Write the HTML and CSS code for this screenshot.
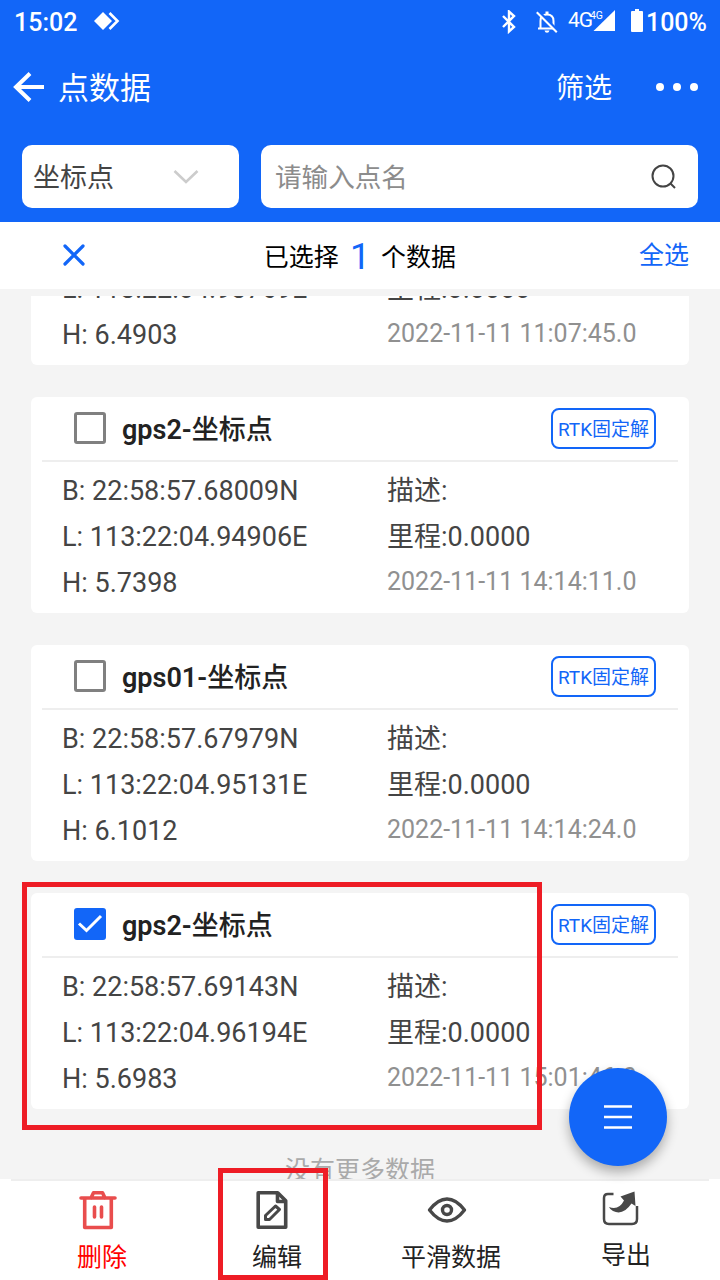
FILE: index.html
```html
<!DOCTYPE html>
<html lang="zh-CN">
<head>
    <meta charset="UTF-8">
    <meta name="viewport" content="width=device-width, initial-scale=1.0">
    <title>点数据</title>
    <link rel="stylesheet" href="styles.css">
</head>
<body>

    <div class="app">
        <header>
            <div class="status">
                <span class="time">15:02</span>
                <svg class="diamond" width="26" height="20" viewBox="0 0 26 20">
                    <path d="M9 1l9 9-9 9-9-9z" fill="#fff"/>
                    <path d="M15.500 2l8 8-8 8" fill="none" stroke="#fff" stroke-width="2.600"/>
                </svg>
                <svg class="bluetooth" width="16" height="24" viewBox="0 0 16 24">
                    <path d="M2 6l11 11-5 4.500V1.500L13 6 2 17" fill="none" stroke="#fff" stroke-width="2.400"/>
                </svg>
                <svg class="bell" width="22" height="24" viewBox="0 0 22 24">
                    <path d="M4.500 18V11q0-6.500 6.500-6.500T17.500 11v7M2 18.500h18" fill="none" stroke="#fff" stroke-width="2"/>
                    <path d="M9.500 1.500h3v3h-3zM8.500 20.500h5q-.5 2.300-2.500 2.300t-2.500-2.300z" fill="#fff"/>
                    <path d="M2.500 1.500l20 20" stroke="#1266f8" stroke-width="3"/>
                    <path d="M.8 2.300l20 20" stroke="#fff" stroke-width="2"/>
                </svg>
                <span class="net">4G</span>
                <svg class="signal" width="26" height="23" viewBox="0 0 26 23">
                    <path d="M25 1v21H3.500z" fill="#fff"/>
                    <text x="0" y="9.500" textLength="13" lengthAdjust="spacingAndGlyphs">4G</text>
                </svg>
                <svg class="battery" width="12" height="23" viewBox="0 0 12 23">
                    <path d="M4 0h4v2h3q1 0 1 1v19q0 1-1 1H1q-1 0-1-1V3q0-1 1-1h3z" fill="#fff"/>
                </svg>
                <span class="percent">100%</span>
            </div>
            <div class="title">
                <svg width="32" height="32" viewBox="0 0 32 32">
                    <path d="M17 2.500L3 16l14 13.500M3 16h28" fill="none" stroke="#fff" stroke-width="4"/>
                </svg>
                <h1>点数据</h1>
                <span class="filter">筛选</span>
                <svg class="more" width="44" height="10" viewBox="0 0 44 10">
                    <g fill="#fff"><circle cx="5" cy="5" r="4"/><circle cx="22" cy="5" r="4"/><circle cx="39" cy="5" r="4"/></g>
                </svg>
            </div>
            <div class="search">
                <div class="select">
                    <span>坐标点</span>
                    <svg width="26" height="16" viewBox="0 0 26 16">
                        <path d="M1.500 2L13 13 24.500 2" fill="none" stroke="#ccc" stroke-width="2.600"/>
                    </svg>
                </div>
                <div class="keyword">
                    <span>请输入点名</span>
                    <svg width="26" height="26" viewBox="0 0 26 26">
                        <g fill="none" stroke="#444" stroke-width="2"><circle cx="12" cy="12" r="10.500"/><path d="M19 19l5 5"/></g>
                    </svg>
                </div>
            </div>
        </header>

        <div class="selected">
            <svg width="24" height="24" viewBox="0 0 24 24">
                <path d="M3 2l18 18M21 2L3 20" fill="none" stroke="#1266f8" stroke-width="3.200" stroke-linecap="round"/>
            </svg>
            <div class="count">已选择<b>1</b>个数据</div>
            <span class="all">全选</span>
        </div>

        <div class="list">
            <div class="card">
                <div class="name"><i class="check"></i><h2><b>gps1-</b>坐标点</h2><span class="tag">RTK固定解</span></div>
                <div class="info">
                    <span>B: 22:58:57.68112N</span><span>描述:</span>
                    <span>L: 113:22:04.93769E</span><span>里程:0.0000</span>
                    <span>H: 6.4903</span><span class="date">2022-11-11 11:07:45.0</span>
                </div>
            </div>
            <div class="card">
                <div class="name"><i class="check"></i><h2><b>gps2-</b>坐标点</h2><span class="tag">RTK固定解</span></div>
                <div class="info">
                    <span>B: 22:58:57.68009N</span><span>描述:</span>
                    <span>L: 113:22:04.94906E</span><span>里程:0.0000</span>
                    <span>H: 5.7398</span><span class="date">2022-11-11 14:14:11.0</span>
                </div>
            </div>
            <div class="card">
                <div class="name"><i class="check"></i><h2><b>gps01-</b>坐标点</h2><span class="tag">RTK固定解</span></div>
                <div class="info">
                    <span>B: 22:58:57.67979N</span><span>描述:</span>
                    <span>L: 113:22:04.95131E</span><span>里程:0.0000</span>
                    <span>H: 6.1012</span><span class="date">2022-11-11 14:14:24.0</span>
                </div>
            </div>
            <div class="card">
                <div class="name">
                    <i class="check on"><svg width="32" height="32" viewBox="0 0 32 32"><path d="M5 15.500l7.500 7L27 8" fill="none" stroke="#fff" stroke-width="3"/></svg></i>
                    <h2><b>gps2-</b>坐标点</h2><span class="tag">RTK固定解</span>
                </div>
                <div class="info">
                    <span>B: 22:58:57.69143N</span><span>描述:</span>
                    <span>L: 113:22:04.96194E</span><span>里程:0.0000</span>
                    <span>H: 5.6983</span><span class="date">2022-11-11 15:01:46.0</span>
                </div>
            </div>
            <p class="nomore">没有更多数据</p>
        </div>

        <footer>
            <div class="item delete">
                <svg width="40" height="40" viewBox="0 0 40 40">
                    <g fill="none" stroke="#e94d4d" stroke-width="3.600" stroke-linejoin="round" stroke-linecap="round">
                        <path d="M3 8h34M6.700 9v28.500h26.600V9M13 8l2.500-5.200h9L27 8"/>
                        <path d="M16.500 17v10M23.500 17v10"/>
                    </g>
                </svg>
                <span>删除</span>
            </div>
            <div class="item edit">
                <svg width="40" height="40" viewBox="0 0 40 40">
                    <g fill="none" stroke="#484848" stroke-width="3.600" stroke-linejoin="round">
                        <path d="M6.200 2.700h19.500l8 8v26.600H6.200z"/>
                        <path d="M25.500 3v8.500H34"/>
                        <path d="M13.500 29.500v-4L23.500 16l4 3.500-10 10z" stroke-width="3"/>
                    </g>
                </svg>
                <span>编辑</span>
            </div>
            <div class="item smooth">
                <svg width="40" height="40" viewBox="0 0 40 40">
                    <g fill="none" stroke="#484848" stroke-width="3.400" stroke-linejoin="round">
                        <path d="M2.500 20Q11 9 20 9t17.500 11Q29 31 20 31T2.500 20z"/>
                        <circle cx="20" cy="20" r="4.500"/>
                    </g>
                </svg>
                <span>平滑数据</span>
            </div>
            <div class="item export">
                <svg width="40" height="40" viewBox="0 0 40 40">
                    <path d="M14.500 5H9Q5 5 5 9v21q0 5 5 5h23q5 0 5-5V17" fill="none" stroke="#484848" stroke-width="2.500"/>
                    <path d="M35.500 2.500l1 14.500-4-2.500Q24 27 14 22q-3-1.500-4-4 10 3.500 15-6.500l-3.500-4z" fill="#484848"/>
                </svg>
                <span>导出</span>
            </div>
        </footer>

        <div class="menu">
            <svg width="28" height="26" viewBox="0 0 28 26">
                <path d="M0 2.500h28M0 13h28M0 23.500h28" stroke="#fff" stroke-width="2.600"/>
            </svg>
        </div>
        <div class="mark mark-card"></div>
        <div class="mark mark-edit"></div>
    </div>

</body>
</html>
```
FILE: styles.css
```css
* {
    box-sizing: border-box;
}
body {
    margin: 0;
    font-family: Roboto, "Noto Sans CJK SC", sans-serif;
    color: #444;
}
h1, h2, p {
    margin: 0;
}
svg {
    display: block;
    flex: none;
}
.app {
    position: relative;
    width: 720px;
    height: 1280px;
    display: flex;
    flex-direction: column;
    overflow: hidden;
    background-color: #f4f4f4;
}
header {
    height: 222px;
    background-color: #1266f8;
    color: #fff;
}
.status {
    display: flex;
    align-items: center;
    height: 43px;
    padding: 0 13px 0 14px;
    font-size: 25px;
    font-weight: 500;
}
.time {
    width: 82px;
    padding-top: 2px;
}
.diamond {
    margin-bottom: 1px;
}
.bluetooth {
    margin-left: 381px;
}
.bell {
    margin-left: 19px;
}
.net {
    width: 24px;
    margin-left: 10px;
    padding-bottom: 3px;
    font-size: 21px;
    font-weight: 400;
    letter-spacing: -1px;
}
.signal {
    margin-left: -2px;
    margin-bottom: 2px;
}
.signal text {
    font-size: 11px;
    font-weight: 400;
    fill: #fff;
}
.battery {
    margin-left: 15px;
    margin-bottom: 2px;
}
.percent {
    margin-left: 3px;
    padding-top: 2px;
}
.title {
    display: flex;
    align-items: center;
    height: 88px;
    padding: 0 21px 0 13px;
}
.title h1 {
    margin-left: 13px;
    padding-bottom: 3px;
    font-size: 31px;
    font-weight: 400;
}
.filter {
    margin-left: auto;
    padding-bottom: 2px;
    font-size: 28px;
}
.more {
    margin-left: 43px;
}
.search {
    display: flex;
    gap: 22px;
    padding: 14px 22px;
    font-size: 27px;
}
.select, .keyword {
    display: flex;
    align-items: center;
    justify-content: space-between;
    height: 63px;
    border-radius: 10px;
    background-color: #fff;
    color: #444;
}
.select {
    width: 217px;
    padding: 0 40px 0 11px;
}
.select span, .keyword span {
    padding-bottom: 2px;
}
.keyword {
    flex: 1;
    padding: 0 21px 0 14px;
}
.keyword span {
    color: #8c8c8c;
    font-size: 26.600px;
}
.selected {
    display: flex;
    align-items: center;
    justify-content: space-between;
    height: 67px;
    padding: 0 31px 0 62px;
    background-color: #fff;
    color: #000;
    font-size: 25px;
}
.count {
    display: flex;
    align-items: center;
    margin-right: 5px;
    padding-bottom: 2px;
}
.count b {
    margin: 0 11px;
    padding-top: 5px;
    color: #1266f8;
    font-size: 36px;
    font-weight: 400;
}
.all {
    color: #1266f8;
    padding-bottom: 5px;
}
.list {
    display: flex;
    flex-direction: column;
    justify-content: flex-end;
    height: 883px;
    margin-top: 7px;
    padding: 0 31px;
    overflow: hidden;
}
.card {
    flex: none;
    height: 216px;
    margin-bottom: 32px;
    padding: 0 11px;
    border-radius: 6px;
    background-color: #fff;
}
.name {
    display: flex;
    align-items: center;
    height: 65px;
    padding: 0 22px 2px 32px;
    border-bottom: 2px solid #eee;
}
.check {
    width: 32px;
    height: 32px;
    border: 3px solid #808080;
    border-radius: 3px;
}
.check.on {
    border: 0;
    background-color: #1266f8;
}
.name h2 {
    margin-left: 16px;
    font-size: 27px;
    font-weight: 500;
    line-height: 40px;
    padding-top: 5px;
    color: #222;
}
.name h2 b {
    font-weight: 600;
}
.tag {
    width: 105px;
    height: 41px;
    margin-left: auto;
    margin-top: 2px;
    border: 2px solid #1266f8;
    border-radius: 8px;
    color: #1266f8;
    font-size: 19px;
    line-height: 39px;
    text-align: center;
    white-space: nowrap;
}
.info {
    display: grid;
    grid-template-columns: 325px 1fr;
    grid-auto-rows: 46px;
    padding: 6px 0 0 20px;
    font-size: 27px;
    line-height: 47px;
    white-space: nowrap;
}
.date {
    color: #909090;
    font-size: 25px;
    line-height: 44px;
}
.nomore {
    flex: none;
    height: 38px;
    padding-top: 10px;
    color: #aaa;
    font-size: 25px;
    line-height: 40px;
    text-align: center;
}
footer {
    position: relative;
    display: flex;
    height: 101px;
    background-color: #fff;
    color: #222;
    font-size: 25px;
}
footer::before {
    content: "";
    position: absolute;
    top: 0;
    left: 11px;
    right: 11px;
    height: 2px;
    background-color: #eee;
}
.item {
    display: flex;
    flex-direction: column;
    align-items: center;
    gap: 8px;
    width: 175px;
    padding-top: 11px;
    line-height: 40px;
}
.delete {
    width: 204px;
    color: #f00;
}
.delete svg {
    margin-left: -8px;
}
.edit {
    width: 146px;
}
.edit svg {
    margin-left: -10px;
}
.smooth {
    width: 202px;
}
.smooth svg {
    margin-left: -8px;
}
.export {
    width: 148px;
    gap: 7px;
    padding-top: 10px;
}
.export svg {
    margin-left: -14px;
}
.menu {
    position: absolute;
    left: 569px;
    top: 1068px;
    display: flex;
    align-items: center;
    justify-content: center;
    width: 98px;
    height: 98px;
    border-radius: 50%;
    background-color: #1266f8;
    box-shadow: 0 6px 12px rgba(0, 0, 0, 0.3);
}
.mark {
    position: absolute;
    border: 5px solid #ee1c25;
}
.mark-card {
    left: 22px;
    top: 882px;
    width: 520px;
    height: 248px;
}
.mark-edit {
    left: 218px;
    top: 1168px;
    width: 110px;
    height: 112px;
}
```
